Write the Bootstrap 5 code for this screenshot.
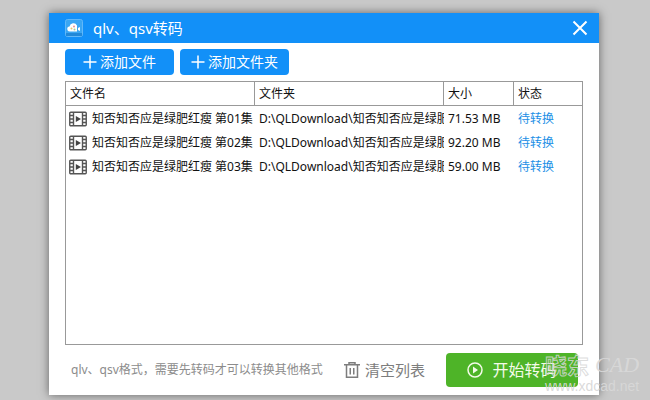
<!DOCTYPE html>
<html lang="zh-CN">
<head>
<meta charset="utf-8">
<meta name="viewport" content="width=device-width, initial-scale=1">
<title>qlv、qsv转码</title>
<link rel="stylesheet" href="https://cdn.jsdelivr.net/npm/bootstrap@5.3.0/dist/css/bootstrap.min.css">
<style>
body{background:#c9c9c9;color:#111;font:12px/18px "Noto Sans","Noto Sans CJK SC",sans-serif;padding:13px 51px 5px 49px}
.win{box-shadow:0 0 9px rgba(0,0,0,.5)}
.titlebar{background:#1290f8;height:30px;padding:0 11px 0 16px;gap:10px}
.titlebar h1{font-size:15px;line-height:20px;font-weight:400}
.tools{gap:6px;padding:6px 16px}
.tool{background:#1290f8;color:#fff;border:0;border-radius:4px;width:109px;height:26px;padding:0;font-size:14px;line-height:20px;gap:3px}
.tool:hover{background:#0b7fe0;color:#fff}
.files{border:1px solid #999}
.files table{table-layout:fixed;border-collapse:separate;border-spacing:0;font-size:12px;line-height:18px}
.files col.c-name,.files col.c-dir{width:189px}
.files col.c-size{width:70px}
.files th,.files td{height:24px;padding:1px 0 0 4px;white-space:nowrap;overflow:hidden;font-weight:400}
.files th{border-bottom:1px solid #999;border-right:1px solid #999}
.files th:last-child{border-right:0}
.files td:first-child{padding-left:3px}
.cell{gap:5px}
.cell svg{flex:none}
.files .state{color:#1b8fe6}
.foot{padding:8px 21px 8px 22px}
.hint{color:#8c8c8c}
.clear{color:#7d7d7d;font-size:15px;line-height:20px;gap:5px}
.go{background:#4eb428;color:#f4fbe9;border:0;border-radius:4px;width:132px;height:34px;font-size:16px;line-height:22px;gap:9px}
.go:hover{background:#439f21;color:#fff}
.stamp{right:11px;bottom:7px;width:94px;pointer-events:none}
.stamp-name{font-size:22px;line-height:28px;font-weight:700;color:transparent;gap:6px}
.stamp-zh{-webkit-text-stroke:1px rgba(215,215,215,.85)}
.stamp-cad{font-family:"Liberation Serif",serif;font-size:22px;font-style:italic;font-weight:400;color:rgba(218,218,218,.9)}
.stamp-url{font:14px/14px "Liberation Sans",sans-serif;color:rgba(216,216,216,.95)}
</style>
<script src="https://cdn.jsdelivr.net/npm/bootstrap@5.3.0/dist/js/bootstrap.bundle.min.js"></script>
</head>
<body class="min-vh-100 d-flex flex-column position-relative">
<main class="win bg-white flex-grow-1 d-flex flex-column">
  <header class="titlebar d-flex align-items-center text-white">
    <svg width="18" height="18" viewBox="0 0 18 18" aria-hidden="true"><rect x=".5" y=".5" width="17" height="17" rx="2" fill="#3aa6f3" stroke="#62b8f8"/><path d="M1 14h16v3H1z" fill="#2188d8"/><path d="M5 12.500a2.500 2.500 0 0 1-.5-5A4 4 0 0 1 12 6.500v6z" fill="#fff"/><path d="M13 9l2-1v4l-2-1z" fill="#fff"/><circle cx="6.500" cy="9.500" r="1" fill="#e8c56a"/><circle cx="9" cy="7.500" r="1" fill="#e58f94"/><circle cx="9.500" cy="10.500" r="1" fill="#a5cf94"/></svg>
    <h1 class="mb-0">qlv、qsv转码</h1>
    <button type="button" class="btn border-0 p-0 ms-auto d-flex text-white" aria-label="关闭"><svg width="16" height="16" viewBox="0 0 16 16" fill="none" stroke="currentColor" stroke-width="2"><path d="M1.500 1.500l13 13M14.500 1.500l-13 13"/></svg></button>
  </header>
  <div class="tools d-flex">
    <button type="button" class="btn tool d-flex align-items-center justify-content-center"><svg width="14" height="14" viewBox="0 0 14 14" fill="none" stroke="currentColor" stroke-width="1.500"><path d="M7 .5v13M.5 7h13"/></svg>添加文件</button>
    <button type="button" class="btn tool d-flex align-items-center justify-content-center"><svg width="14" height="14" viewBox="0 0 14 14" fill="none" stroke="currentColor" stroke-width="1.500"><path d="M7 .5v13M.5 7h13"/></svg>添加文件夹</button>
  </div>
  <section class="files mx-3 flex-grow-1">
    <table class="w-100">
      <colgroup><col class="c-name"><col class="c-dir"><col class="c-size"><col></colgroup>
      <thead><tr><th scope="col">文件名</th><th scope="col">文件夹</th><th scope="col">大小</th><th scope="col">状态</th></tr></thead>
      <tbody>
        <tr><td><div class="cell d-flex align-items-center"><svg width="18" height="16" viewBox="0 0 18 16" aria-hidden="true"><use href="#film"/></svg>知否知否应是绿肥红瘦 第01集</div></td><td>D:\QLDownload\知否知否应是绿肥</td><td>71.53 MB</td><td class="state">待转换</td></tr>
        <tr><td><div class="cell d-flex align-items-center"><svg width="18" height="16" viewBox="0 0 18 16" aria-hidden="true"><use href="#film"/></svg>知否知否应是绿肥红瘦 第02集</div></td><td>D:\QLDownload\知否知否应是绿肥</td><td>92.20 MB</td><td class="state">待转换</td></tr>
        <tr><td><div class="cell d-flex align-items-center"><svg width="18" height="16" viewBox="0 0 18 16" aria-hidden="true"><use href="#film"/></svg>知否知否应是绿肥红瘦 第03集</div></td><td>D:\QLDownload\知否知否应是绿肥</td><td>59.00 MB</td><td class="state">待转换</td></tr>
      </tbody>
    </table>
  </section>
  <footer class="foot d-flex align-items-center">
    <span class="hint text-nowrap">qlv、qsv格式，需要先转码才可以转换其他格式</span>
    <button type="button" class="btn clear border-0 p-0 ms-auto d-flex align-items-center text-nowrap"><svg width="16" height="16" viewBox="0 0 16 16" fill="none" stroke="currentColor" stroke-width="1.500"><path d="M0 2.750h16M5 2.500V.75h6V2.500M2.500 3v12.200h11V3M6.250 6v6.500M9.750 6v6.500"/></svg>清空列表</button>
    <button type="button" class="btn go ms-auto p-0 d-flex align-items-center justify-content-center text-nowrap"><svg width="16" height="16" viewBox="0 0 16 16"><circle cx="8" cy="8" r="7" fill="none" stroke="currentColor" stroke-width="1.500"/><path d="M6 4.500l5 3.500-5 3.500z" fill="currentColor"/></svg>开始转码</button>
  </footer>
</main>
<div class="stamp position-absolute text-nowrap">
  <div class="stamp-name d-flex"><span class="stamp-zh">晓东</span><span class="stamp-cad">CAD</span></div>
  <div class="stamp-url">www.xdcad.net</div>
</div>
<svg width="0" height="0" class="position-absolute" aria-hidden="true"><symbol id="film" viewBox="0 0 18 16"><g fill="none" stroke="#555" stroke-width="1.400"><rect x=".75" y="1.250" width="16.500" height="13.500" rx="1"/><path d="M4.500 1v14M13.500 1v14M1 4.500h3.500M1 8h3.500M1 11.500h3.500M13.500 4.500H17M13.500 8H17M13.500 11.500H17"/></g><path d="M6.800 5L12 8l-5.200 3z" fill="#444"/></symbol></svg>
</body>
</html>
